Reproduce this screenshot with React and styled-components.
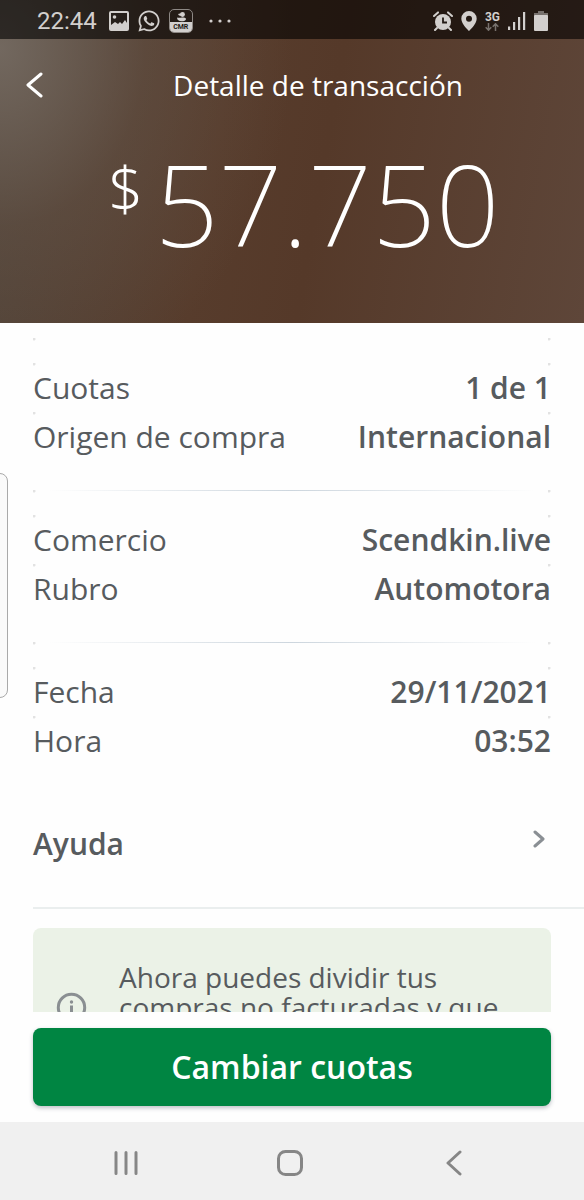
import styled, { createGlobalStyle } from 'styled-components';
import { FaWhatsapp } from 'react-icons/fa';

const GlobalStyle = createGlobalStyle`
    *, *::before, *::after {
        box-sizing: border-box;
    }

    body {
        margin: 0;
        background: #fefefe;
        color: #575b5e;
        font-family: 'Open Sans', 'Noto Sans', sans-serif;
    }
`;

const Screen = styled.div`
    position: relative;
    display: flex;
    flex-direction: column;
    height: 100vh;
    overflow: hidden;
`;

const Top = styled.div`
    color: #fff;
    background:
        radial-gradient(ellipse 50% 110% at 0% 15%, rgba(118, 108, 99, 0.9), rgba(104, 88, 76, 0.4) 50%, rgba(90, 64, 48, 0)),
        linear-gradient(100deg, #50443a 0%, #573c2c 38%, #553929 55%, #5e4639 100%);
`;

const StatusBar = styled.div`
    display: flex;
    align-items: center;
    justify-content: space-between;
    height: 39px;
    padding: 2px 36px 0 37px;
    background: rgba(0, 0, 0, 0.6);
    color: #d2cfcd;
`;

const StatusGroup = styled.div`
    display: flex;
    align-items: center;
    gap: 8px;
`;

const Clock = styled.span`
    margin-right: 4px;
    font-family: Roboto, sans-serif;
    font-size: 24px;
    line-height: 28px;
`;

const AppBadge = styled.span`
    display: flex;
    flex-direction: column;
    justify-content: flex-end;
    width: 24px;
    height: 24px;
    margin-right: 8px;
    border: 1px solid #8d8884;
    border-radius: 5px;
    overflow: hidden;
`;

const BadgeText = styled.span`
    background: #d2cfcd;
    color: #231a15;
    font-family: Roboto, sans-serif;
    font-size: 7px;
    font-weight: 700;
    line-height: 10px;
    text-align: center;
`;

const Network = styled.span`
    display: flex;
    flex-direction: column;
    align-items: center;
    font-family: Roboto, sans-serif;
    font-size: 12px;
    font-weight: 700;
    line-height: 12px;
`;

const Header = styled.header`
    display: flex;
    align-items: center;
    height: 91px;
`;

const BackButton = styled.button`
    display: flex;
    align-items: center;
    justify-content: flex-end;
    width: 52px;
    height: 48px;
    padding: 0 9px 0 0;
    border: none;
    background: none;
    color: inherit;
    cursor: pointer;
`;

const Title = styled.h1`
    flex: 1;
    margin: 0;
    font-size: 28px;
    font-weight: 400;
    line-height: 36px;
    text-align: center;
`;

const Amount = styled.p`
    display: flex;
    align-items: flex-start;
    justify-content: center;
    height: 193px;
    margin: 0;
    padding: 18px 0 0 24px;
    font-family: 'Noto Sans', 'Open Sans', sans-serif;
    font-size: 112px;
    font-weight: 200;
    line-height: 112px;
`;

const Currency = styled.span`
    margin-right: 12px;
    font-size: 60px;
    font-weight: 300;
    line-height: 80px;
`;

const Content = styled.main`
    flex: 1;
    min-height: 0;
    padding-top: 15px;
    overflow: hidden;
`;

const dots = `
    radial-gradient(circle at 1px 1px, #e2e2e2 1px, transparent 2px) left top / 3px 3px no-repeat,
    radial-gradient(circle at 1px 1px, #e2e2e2 1px, transparent 2px) right top / 3px 3px no-repeat
`;

const Group = styled.dl`
    margin: 0 33px;
    padding: 25px 0 29px;
    background:
        ${dots},
        linear-gradient(90deg, transparent 3%, #cdd6de 50%, transparent 97%) top / 100% ${({ $line }) => ($line ? 1 : 0)}px no-repeat;
`;

const Row = styled.div`
    display: flex;
    align-items: center;
    justify-content: space-between;
    height: 49px;
    font-size: 30px;
    line-height: 40px;
    background: ${dots};
`;

const Label = styled.dt`
    font-weight: 400;
`;

const Value = styled.dd`
    margin: 0;
    font-weight: 600;
`;

const HelpLink = styled.a`
    display: flex;
    justify-content: space-between;
    height: 115px;
    margin-left: 33px;
    padding: 30px 39px 0 0;
    border-bottom: 2px solid #eaeeee;
    color: inherit;
    font-size: 30px;
    font-weight: 600;
    line-height: 40px;
    text-decoration: none;

    svg {
        margin-top: 6px;
        color: #8a8f94;
    }
`;

const Notice = styled.div`
    display: flex;
    gap: 32px;
    margin: 19px 33px 0;
    padding: 34px 32px 32px 23px;
    border-radius: 8px;
    background: #ebf2e7;
    font-size: 28px;
    line-height: 30px;

    svg {
        flex: none;
        margin-top: 30px;
        color: #8a8f92;
    }
`;

const NoticeText = styled.p`
    margin: 0;
`;

const Footer = styled.footer`
    padding: 16px 33px;
    background: #fefefe;
`;

const PrimaryButton = styled.button`
    display: block;
    width: 100%;
    height: 78px;
    padding: 0 0 2px;
    border: none;
    border-radius: 8px;
    background: #008542;
    box-shadow: 0 2px 4px rgba(40, 50, 70, 0.3);
    color: #fff;
    font-family: inherit;
    font-size: 32px;
    font-weight: 600;
    cursor: pointer;
`;

const NavBar = styled.nav`
    display: flex;
    align-items: center;
    justify-content: space-around;
    height: 78px;
    padding: 4px 48px 0 44px;
    background: #f0f0f0;
`;

const NavButton = styled.button`
    display: flex;
    align-items: center;
    justify-content: center;
    width: 64px;
    height: 64px;
    padding: 0;
    border: none;
    background: none;
    color: #868686;
`;

// handle of the side panel, drawn over the page at the left edge
const EdgeHandle = styled.div`
    position: absolute;
    top: 473px;
    left: -8px;
    width: 16px;
    height: 225px;
    border: 1px solid #a9a9a9;
    border-radius: 8px;
    background: #fafafa;
`;

const groups = [
    [
        { label: 'Cuotas', value: '1 de 1' },
        { label: 'Origen de compra', value: 'Internacional' },
    ],
    [
        { label: 'Comercio', value: 'Scendkin.live' },
        { label: 'Rubro', value: 'Automotora' },
    ],
    [
        { label: 'Fecha', value: '29/11/2021' },
        { label: 'Hora', value: '03:52' },
    ],
];

const PictureIcon = () => (
    <svg width="20" height="20" viewBox="0 0 20 20" fill="none">
        <rect x="1" y="1" width="18" height="18" rx="1" stroke="currentColor" strokeWidth="2" />
        <circle cx="5.5" cy="6" r="1.8" fill="currentColor" />
        <path d="M2 14l4-3 3 2 2-2 2 2 3-4 2 3v7H2z" fill="currentColor" />
    </svg>
);

const DuckIcon = () => (
    <svg width="22" height="12" viewBox="0 0 22 12" fill="currentColor">
        <circle cx="12.500" cy="4.500" r="2.400" />
        <path d="M8 4l4-1v3l-3-.500zM7 7.500c2 .8 3 0 5 0s4 0 4 1.500-2 2.300-4.500 2.300S7 10 7 7.500z" />
    </svg>
);

const MoreIcon = () => (
    <svg width="22" height="4" viewBox="0 0 22 4" fill="currentColor">
        <circle cx="2" cy="2" r="1.6" />
        <circle cx="11" cy="2" r="1.6" />
        <circle cx="20" cy="2" r="1.6" />
    </svg>
);

const AlarmIcon = () => (
    <svg width="20" height="20" viewBox="0 0 20 20" fill="none">
        <circle cx="10" cy="11" r="8" fill="currentColor" />
        <path d="M1 5l4-3.600M19 5l-4-3.600M4 17l-2 2M16 17l2 2" stroke="currentColor" strokeWidth="2" strokeLinecap="round" />
        <path d="M10 6.500v5h4" stroke="#231a15" strokeWidth="1.800" />
    </svg>
);

const PinIcon = () => (
    <svg width="16" height="20" viewBox="0 0 16 20" fill="currentColor">
        <path fillRule="evenodd" d="M8 0a7.700 7.700 0 0 0-7.700 7.700C.3 13 8 20 8 20s7.700-7 7.700-12.300A7.700 7.700 0 0 0 8 0zm0 4.700a3 3 0 1 1 0 6 3 3 0 0 1 0-6z" />
    </svg>
);

const TransferIcon = () => (
    <svg width="14" height="8" viewBox="0 0 14 8" fill="none" stroke="#77716d" strokeWidth="1.500">
        <path d="M3.500 0v7M.7 4.300l2.800 2.900 2.800-2.900M10.500 8V1M7.700 3.700L10.500.8l2.800 2.900" />
    </svg>
);

const SignalIcon = () => (
    <svg width="18" height="20" viewBox="0 0 18 20" fill="currentColor">
        <path d="M0 15.500h2.200V19H0zM5 11h2.200v8H5zM10 6h2.200v13H10zM15 1h2.200v18H15z" />
    </svg>
);

const BatteryIcon = () => (
    <svg width="14" height="20" viewBox="0 0 14 20">
        <path d="M4 0h6v2h4v3H0V2h4z" fill="#77716d" />
        <rect y="4" width="14" height="16" rx="1" fill="currentColor" />
    </svg>
);

const Chevron = ({ width, height, stroke, flip }) => (
    <svg width={width} height={height} viewBox={`0 0 ${width} ${height}`} fill="none">
        <path
            d={flip
                ? `M2 2L${width - 2} ${height / 2}L2 ${height - 2}`
                : `M${width - 2} 2L2 ${height / 2}L${width - 2} ${height - 2}`}
            stroke="currentColor"
            strokeWidth={stroke}
            strokeLinecap="round"
            strokeLinejoin="round"
        />
    </svg>
);

const InfoIcon = () => (
    <svg width="31" height="31" viewBox="0 0 31 31" fill="none">
        <circle cx="15.500" cy="15.500" r="13.200" stroke="currentColor" strokeWidth="3" />
        <circle cx="15.500" cy="10" r="1.700" fill="currentColor" />
        <path d="M15.500 13.500v9" stroke="currentColor" strokeWidth="3" />
    </svg>
);

const App = () => {
    return (
        <Screen>
            <GlobalStyle />
            <Top>
                <StatusBar>
                    <StatusGroup>
                        <Clock>22:44</Clock>
                        <PictureIcon />
                        <FaWhatsapp size={24} />
                        <AppBadge>
                            <DuckIcon />
                            <BadgeText>CMR</BadgeText>
                        </AppBadge>
                        <MoreIcon />
                    </StatusGroup>
                    <StatusGroup>
                        <AlarmIcon />
                        <PinIcon />
                        <Network>
                            3G
                            <TransferIcon />
                        </Network>
                        <SignalIcon />
                        <BatteryIcon />
                    </StatusGroup>
                </StatusBar>
                <Header>
                    <BackButton aria-label="Volver">
                        <Chevron width={17} height={26} stroke={3} />
                    </BackButton>
                    <Title>Detalle de transacción</Title>
                </Header>
                <Amount>
                    <Currency>$</Currency>
                    57.750
                </Amount>
            </Top>
            <Content>
                {groups.map((rows, index) => (
                    <Group key={index} $line={index > 0}>
                        {rows.map((row) => (
                            <Row key={row.label}>
                                <Label>{row.label}</Label>
                                <Value>{row.value}</Value>
                            </Row>
                        ))}
                    </Group>
                ))}
                <HelpLink href="#ayuda">
                    Ayuda
                    <Chevron width={12} height={18} stroke={3} flip />
                </HelpLink>
                <Notice>
                    <InfoIcon />
                    <NoticeText>Ahora puedes dividir tus compras no facturadas y que</NoticeText>
                </Notice>
            </Content>
            <Footer>
                <PrimaryButton>Cambiar cuotas</PrimaryButton>
            </Footer>
            <NavBar>
                <NavButton aria-label="Recientes">
                    <svg width="24" height="26" viewBox="0 0 24 26" stroke="currentColor" strokeWidth="3" strokeLinecap="round">
                        <path d="M2 2.500v21M12 2.500v21M22 2.500v21" />
                    </svg>
                </NavButton>
                <NavButton aria-label="Inicio">
                    <svg width="26" height="26" viewBox="0 0 26 26" fill="none" stroke="currentColor" strokeWidth="3">
                        <rect x="1.500" y="1.500" width="23" height="23" rx="7" />
                    </svg>
                </NavButton>
                <NavButton aria-label="Atrás">
                    <Chevron width={16} height={26} stroke={3} />
                </NavButton>
            </NavBar>
            <EdgeHandle />
        </Screen>
    );
};

export default App;
